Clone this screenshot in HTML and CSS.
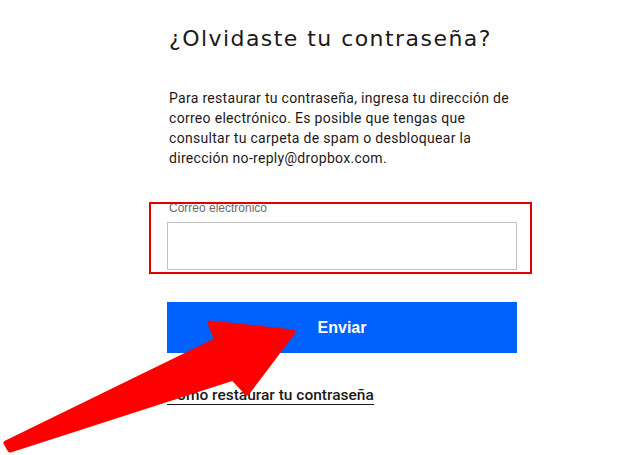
FILE: index.html
```html
<!DOCTYPE html>
<html lang="es">
<head>
<meta charset="utf-8">
<link rel="stylesheet" href="styles.css">
</head>
<body>
<main class="panel">
  <h1 class="title">¿Olvidaste tu contraseña?</h1>
  <p class="intro">Para restaurar tu contraseña, ingresa tu dirección de correo electrónico. Es posible que tengas que consultar tu carpeta de spam o desbloquear la dirección no-reply@dropbox.com.</p>
  <div class="field">
    <label class="label">Correo electrónico</label>
    <div class="input"></div>
  </div>
  <button class="submit">Enviar</button>
  <a class="help" href="#">Cómo restaurar tu contraseña</a>
</main>
<div class="highlight"></div>
<svg class="arrow" width="628" height="455" viewBox="0 0 628 455">
  <polygon points="210,323 293,332 247,393 233,378 10,450 6,443 217,340" fill="#ff0000" stroke="#ff0000" stroke-width="5" stroke-linejoin="round"/>
</svg>
</body>
</html>
```
FILE: styles.css
```css
html, body {
  margin: 0;
  padding: 0;
  background: #ffffff;
}
body {
  width: 628px;
  height: 455px;
  overflow: hidden;
  position: relative;
  font-family: Roboto, "Liberation Sans", sans-serif;
  color: #1e1919;
}
.panel {
  margin-left: 167px;
  width: 350px;
  padding-top: 24px;
  display: flex;
  flex-direction: column;
}
.title {
  margin: 0 0 0 2px;
  font-family: "DejaVu Sans", sans-serif;
  font-weight: normal;
  font-size: 22px;
  line-height: 30px;
  letter-spacing: 1.45px;
  color: #1e1919;
}
.intro {
  margin: 34px 0 0 2px;
  font-size: 14px;
  line-height: 20px;
  letter-spacing: 0.3px;
  color: #1e1919;
}
.field {
  margin-top: 33px;
  display: flex;
  flex-direction: column;
}
.label {
  margin-left: 2px;
  font-family: "Liberation Sans", sans-serif;
  font-size: 12px;
  line-height: 14px;
  color: #6b6b6b;
}
.input {
  margin-top: 7px;
  height: 46px;
  border: 1px solid #c2c2c2;
  background: #fff;
}
.submit {
  margin-top: 32px;
  height: 51px;
  border: none;
  background: #0061fe;
  color: #ffffff;
  font-family: "Liberation Sans", sans-serif;
  font-weight: bold;
  font-size: 16px;
  padding: 0;
}
.help {
  margin-top: 33px;
  align-self: flex-start;
  font-size: 15.5px;
  line-height: 18px;
  font-weight: 500;
  color: #1e1919;
  text-decoration: none;
  border-bottom: 1px solid #1e1919;
}
.highlight {
  position: absolute;
  left: 149px;
  top: 202px;
  width: 379px;
  height: 68px;
  border: 2px solid #e00000;
}
.arrow {
  position: absolute;
  left: 0;
  top: 0;
}
```
